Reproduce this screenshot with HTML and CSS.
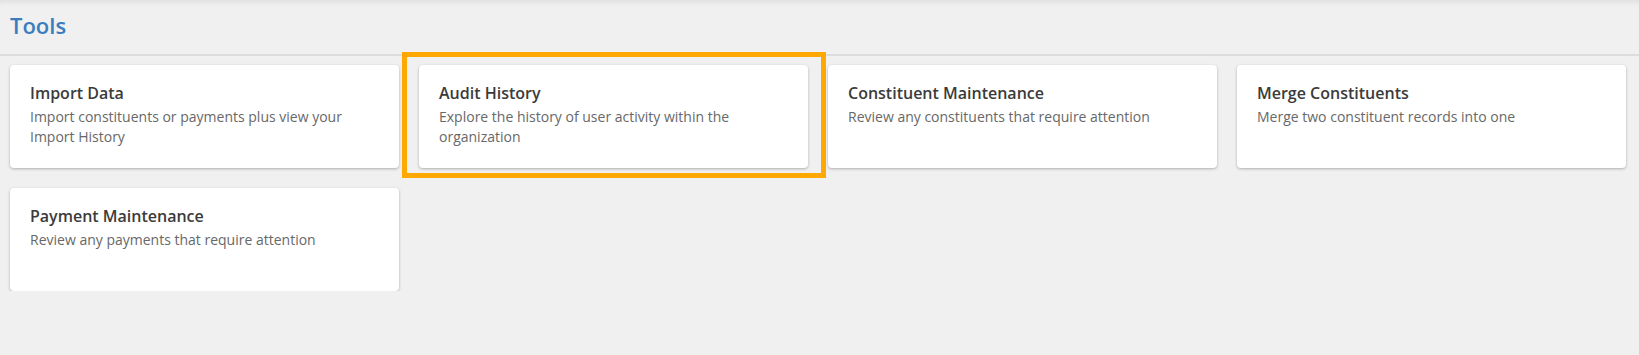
FILE: index.html
```html
<!doctype html>
<html>
  <head>
    <meta charset="utf-8">
    <link rel="stylesheet" href="styles.css">
  </head>
  <body>
    <div class="page-header">
      <h1 class="page-title">Tools</h1>
    </div>

    <div class="tool-grid">
      <div class="tool-card">
        <div class="tool-name">Import Data</div>
        <div class="tool-desc">Import constituents or payments plus view your Import History</div>
      </div>
      <div class="tool-slot">
        <div class="tool-card">
          <div class="tool-name">Audit History</div>
          <div class="tool-desc">Explore the history of user activity within the organization</div>
        </div>
        <div class="highlight"></div>
      </div>
      <div class="tool-card">
        <div class="tool-name">Constituent Maintenance</div>
        <div class="tool-desc">Review any constituents that require attention</div>
      </div>
      <div class="tool-card">
        <div class="tool-name">Merge Constituents</div>
        <div class="tool-desc">Merge two constituent records into one</div>
      </div>
      <div class="tool-card">
        <div class="tool-name">Payment Maintenance</div>
        <div class="tool-desc">Review any payments that require attention</div>
      </div>
    </div>
  </body>
</html>
```

FILE: styles.css
```css
html, body {
  margin: 0;
  padding: 0;
  background-color: #f0f0f0;
  font-family: "Open Sans", "Noto Sans", sans-serif;
}

.page-header {
  height: 56px;
  border-bottom: 2px solid #dcdcdc;
  padding-left: 10px;
  box-shadow: inset 0 6px 6px -4px rgba(0, 0, 0, 0.08);
  box-sizing: border-box;
}

.page-title {
  margin: 0;
  padding-top: 10px;
  font-size: 22px;
  line-height: 30px;
  font-weight: 600;
  color: #3a7dbf;
}

.tool-grid {
  display: grid;
  grid-template-columns: repeat(4, 389px);
  column-gap: 20px;
  row-gap: 20px;
  padding: 9px 10px 0 10px;
}

.tool-slot {
  position: relative;
}

.tool-card {
  background-color: #fff;
  border-radius: 4px;
  box-shadow: 0 1px 3px rgba(0, 0, 0, 0.28);
  padding: 17px 20px 0 20px;
  height: 103px;
  box-sizing: border-box;
}

.tool-name {
  font-size: 16px;
  line-height: 22px;
  font-weight: 600;
  color: #3b3b3b;
}

.tool-desc {
  margin-top: 3px;
  font-size: 14px;
  line-height: 20px;
  color: #686868;
}

.highlight {
  position: absolute;
  top: -13px;
  left: -17px;
  right: -18px;
  bottom: -10px;
  border: 5px solid #ffa800;
  pointer-events: none;
}
```
